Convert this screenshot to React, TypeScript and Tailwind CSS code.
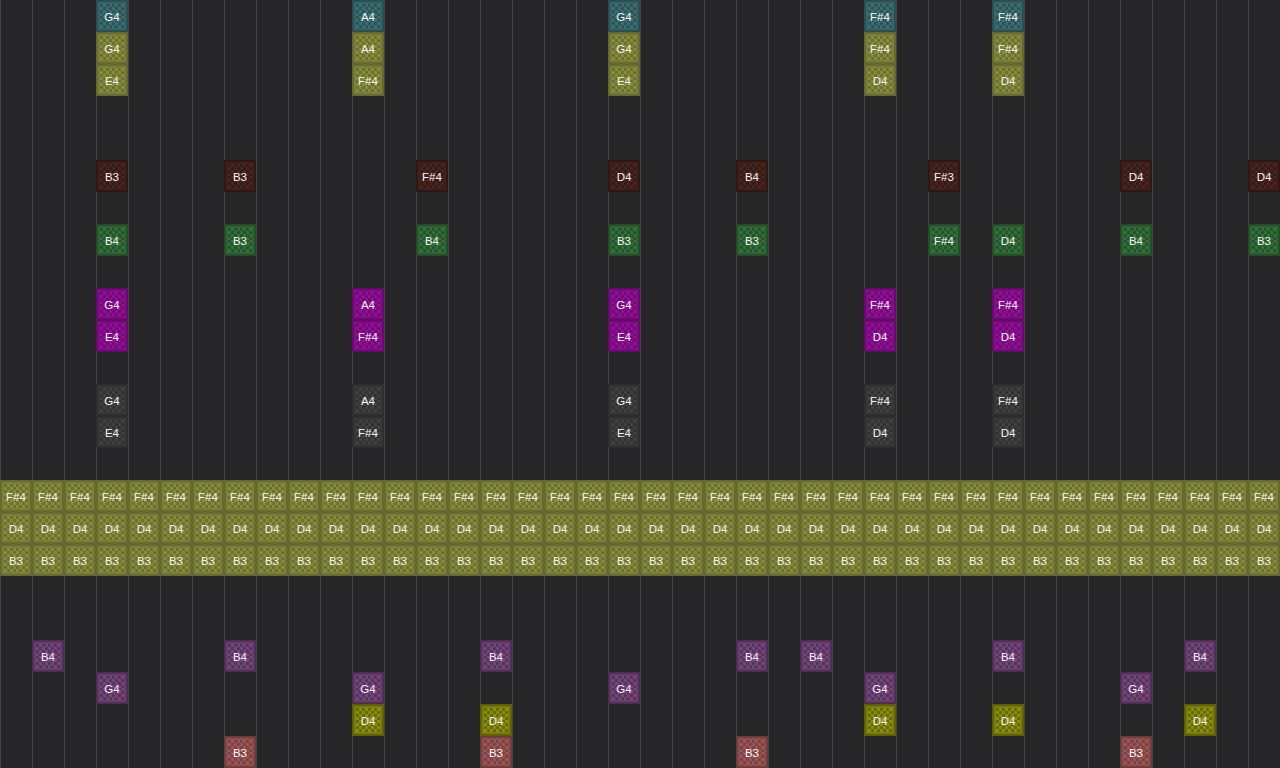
const notes: Record<string, { frame: string; check: string }> = {
  teal: { frame: 'border-[#2a5053] bg-[#376467]', check: 'bg-[conic-gradient(#3c6e71_25%,#2c5559_0_50%,#3c6e71_0_75%,#2c5559_0)]' },
  olive: { frame: 'border-[#666a30] bg-[#7b7f38]', check: 'bg-[conic-gradient(#878c3b_25%,#6c7030_0_50%,#878c3b_0_75%,#6c7030_0)]' },
  brown: { frame: 'border-[#2f1813] bg-[#40211b]', check: 'bg-[conic-gradient(#482520_25%,#351a15_0_50%,#482520_0_75%,#351a15_0)]' },
  green: { frame: 'border-[#234f27] bg-[#2e6635]', check: 'bg-[conic-gradient(#336f3a_25%,#25542b_0_50%,#336f3a_0_75%,#25542b_0)]' },
  magenta: { frame: 'border-[#670a6d] bg-[#850d8c]', check: 'bg-[conic-gradient(#930f9a_25%,#6f0a75_0_50%,#930f9a_0_75%,#6f0a75_0)]' },
  gray: { frame: 'border-[#2e2e2e] bg-[#383838]', check: 'bg-[conic-gradient(#424242_25%,#313131_0_50%,#424242_0_75%,#313131_0)]' },
  purple: { frame: 'border-[#4f2e54] bg-[#693f6f]', check: 'bg-[conic-gradient(#74457a_25%,#58335e_0_50%,#74457a_0_75%,#58335e_0)]' },
  yellow: { frame: 'border-[#5e6007] bg-[#7d7f0b]', check: 'bg-[conic-gradient(#8a8c0d_25%,#686a08_0_50%,#8a8c0d_0_75%,#686a08_0)]' },
  red: { frame: 'border-[#703b3b] bg-[#8c4e4e]', check: 'bg-[conic-gradient(#985656_25%,#7c4242_0_50%,#985656_0_75%,#7c4242_0)]' },
};

type Row = { color: string; cells: [number, string][] } | null;

const pick = (cols: number[], labels: string[]): [number, string][] => cols.map((c, i) => [c, labels[i]]);
const chord = [3, 11, 19, 27, 31];
const all = (label: string): [number, string][] => Array.from({ length: 40 }, (_, i) => [i, label]);

const rows: Row[] = [
  { color: 'teal', cells: pick(chord, ['G4', 'A4', 'G4', 'F#4', 'F#4']) },
  { color: 'olive', cells: pick(chord, ['G4', 'A4', 'G4', 'F#4', 'F#4']) },
  { color: 'olive', cells: pick(chord, ['E4', 'F#4', 'E4', 'D4', 'D4']) },
  null,
  null,
  { color: 'brown', cells: pick([3, 7, 13, 19, 23, 29, 35, 39], ['B3', 'B3', 'F#4', 'D4', 'B4', 'F#3', 'D4', 'D4']) },
  null,
  { color: 'green', cells: pick([3, 7, 13, 19, 23, 29, 31, 35, 39], ['B4', 'B3', 'B4', 'B3', 'B3', 'F#4', 'D4', 'B4', 'B3']) },
  null,
  { color: 'magenta', cells: pick(chord, ['G4', 'A4', 'G4', 'F#4', 'F#4']) },
  { color: 'magenta', cells: pick(chord, ['E4', 'F#4', 'E4', 'D4', 'D4']) },
  null,
  { color: 'gray', cells: pick(chord, ['G4', 'A4', 'G4', 'F#4', 'F#4']) },
  { color: 'gray', cells: pick(chord, ['E4', 'F#4', 'E4', 'D4', 'D4']) },
  null,
  { color: 'olive', cells: all('F#4') },
  { color: 'olive', cells: all('D4') },
  { color: 'olive', cells: all('B3') },
  null,
  null,
  { color: 'purple', cells: pick([1, 7, 15, 23, 25, 31, 37], ['B4', 'B4', 'B4', 'B4', 'B4', 'B4', 'B4']) },
  { color: 'purple', cells: pick([3, 11, 19, 27, 35], ['G4', 'G4', 'G4', 'G4', 'G4']) },
  { color: 'yellow', cells: pick([11, 15, 27, 31, 37], ['D4', 'D4', 'D4', 'D4', 'D4']) },
  { color: 'red', cells: pick([7, 15, 23, 35], ['B3', 'B3', 'B3', 'B3']) },
];

const Note = ({ label, color }: { label: string; color: string }) => (
  <div className={`h-8 w-8 border-2 p-0.5 ${notes[color].frame}`}>
    <div className={`flex h-full w-full items-center justify-center bg-[length:6px_6px] pt-1 text-[11.5px] leading-none text-[#f5f5f5] ${notes[color].check}`}>
      {label}
    </div>
  </div>
);

const App = () => (
  <div className="h-[768px] w-[1280px] overflow-hidden bg-[#262628] font-['Liberation_Sans',Arial,sans-serif]">
    {rows.map((row, r) => (
      <div key={r} className="flex h-8">
        {Array.from({ length: 40 }, (_, c) => {
          const cell = row?.cells.find(([col]) => col === c);
          return (
            <div key={c} className="h-8 w-8 shrink-0 shadow-[inset_1px_0_0_#444446]">
              {cell && row && <Note label={cell[1]} color={row.color} />}
            </div>
          );
        })}
      </div>
    ))}
  </div>
);

export default App;
